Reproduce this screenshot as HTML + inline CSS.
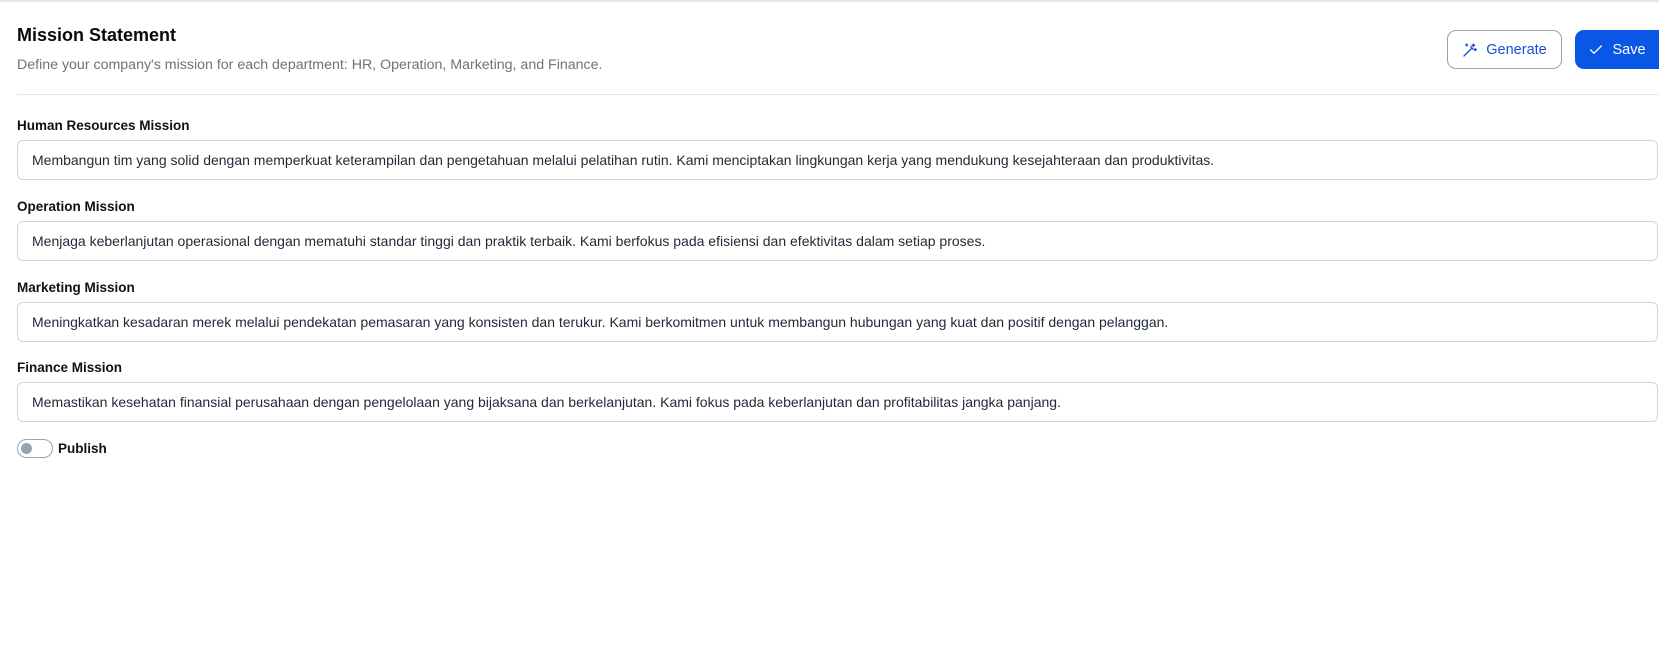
<!DOCTYPE html>
<html><head><meta charset="utf-8"><style>
*{box-sizing:border-box;margin:0;padding:0}
body{width:1659px;height:654px;background:#fff;font-family:"Liberation Sans",sans-serif;color:#111;position:relative;overflow:hidden;border-top:2px solid #e5e7eb}
.abs{position:absolute}
h1{position:absolute;left:17px;top:23px;font-size:18px;font-weight:bold;color:#0a0a0a}
.sub{left:17px;top:55px;font-size:14.2px;color:#6b7280}
.hr{left:17px;right:0;top:92px;height:1px;background:#e5e7eb}
.lbl{left:17px;font-size:13.5px;font-weight:bold;color:#111}
.inp{left:17px;right:1px;height:40px;border:1px solid #d4d4d8;border-radius:6px;font-size:14px;color:#1f2937;padding-left:14px;line-height:38px;white-space:nowrap}
.btn{top:28px;height:39px;border-radius:9px;font-size:14.5px;display:flex;align-items:center;justify-content:center;gap:8px}
</style></head><body>
<h1>Mission Statement</h1>
<div class="abs sub">Define your company's mission for each department: HR, Operation, Marketing, and Finance.</div>
<div class="abs btn" style="left:1447px;width:115px;border:1px solid #94a3b8;color:#1d4ed8">
<svg width="16" height="16" viewBox="0 0 24 24" fill="none" stroke="#1d4ed8" stroke-width="2" stroke-linecap="round"><path d="M3 21l12-12M13 7l4 4"/><path d="M17 3v4M15 5h4M20 10v3M18.5 11.5h3M7 3v3M5.5 4.5h3"/></svg>Generate</div>
<div class="abs btn" style="left:1575px;width:84px;background:#0a56e6;color:#fff;border-radius:9px 0 0 9px">
<svg width="16" height="16" viewBox="0 0 24 24" fill="none" stroke="#fff" stroke-width="2" stroke-linecap="round" stroke-linejoin="round"><path d="M4 12l5 5L20 6"/></svg>Save</div>
<div class="abs hr"></div>
<div class="abs lbl" style="top:116px">Human Resources Mission</div>
<div class="abs inp" style="top:138px">Membangun tim yang solid dengan memperkuat keterampilan dan pengetahuan melalui pelatihan rutin. Kami menciptakan lingkungan kerja yang mendukung kesejahteraan dan produktivitas.</div>
<div class="abs lbl" style="top:197px">Operation Mission</div>
<div class="abs inp" style="top:219px">Menjaga keberlanjutan operasional dengan mematuhi standar tinggi dan praktik terbaik. Kami berfokus pada efisiensi dan efektivitas dalam setiap proses.</div>
<div class="abs lbl" style="top:278px">Marketing Mission</div>
<div class="abs inp" style="top:300px">Meningkatkan kesadaran merek melalui pendekatan pemasaran yang konsisten dan terukur. Kami berkomitmen untuk membangun hubungan yang kuat dan positif dengan pelanggan.</div>
<div class="abs lbl" style="top:358px">Finance Mission</div>
<div class="abs inp" style="top:380px">Memastikan kesehatan finansial perusahaan dengan pengelolaan yang bijaksana dan berkelanjutan. Kami fokus pada keberlanjutan dan profitabilitas jangka panjang.</div>
<div class="abs" style="left:17px;top:437px;width:36px;height:19px;border:1px solid #94a3b8;border-radius:10px"><div style="position:absolute;left:3px;top:3px;width:11px;height:11px;border-radius:50%;background:#94a3b8"></div></div>
<div class="abs lbl" style="left:58px;top:439px">Publish</div>
</body></html>
